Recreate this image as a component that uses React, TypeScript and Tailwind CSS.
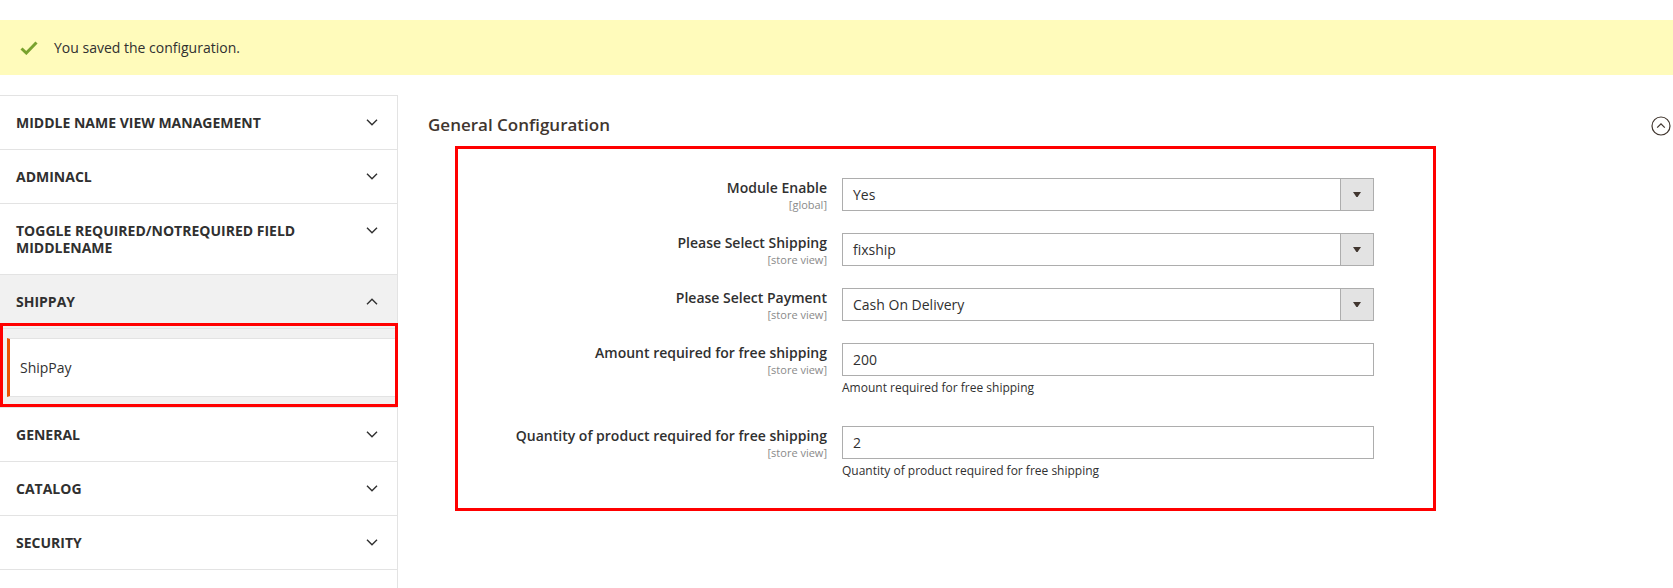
import React from "react";

const NAV_TOP = [
  "Middle Name View Management",
  "AdminACL",
  "Toggle Required/NotRequired Field MiddleName",
];

const NAV_BOTTOM = ["General", "Catalog", "Security"];

function Chevron({ up }: { up?: boolean }) {
  return (
    <svg width="12" height="7" viewBox="0 0 12 7" className="mt-[5px] shrink-0">
      <path
        d={up ? "M1 6.2l5-5 5 5" : "M1 .8l5 5 5-5"}
        fill="none"
        stroke="#303030"
        strokeWidth="1.4"
      />
    </svg>
  );
}

function NavTitle({ label, open }: { label: string; open?: boolean }) {
  return (
    <div
      className={`flex items-start justify-between border-t border-[#e3e3e3] py-[18px] pl-[16px] pr-[19px] ${
        open ? "bg-[#f1f1f1]" : "bg-white"
      }`}
    >
      <span className="pr-[36px] text-[14px] font-bold uppercase leading-[17px] text-[#303030]">
        {label}
      </span>
      <Chevron up={open} />
    </div>
  );
}

function SelectBox({ value }: { value: string }) {
  return (
    <div className="flex h-[33px] w-[532px] border border-[#adadad] bg-white">
      <div className="flex flex-1 items-center pl-[10px] text-[14px] text-[#303030]">{value}</div>
      <div className="flex w-[33px] items-center justify-center border-l border-[#adadad] bg-[#e3e3e3]">
        <svg width="8" height="5" viewBox="0 0 8 5">
          <path d="M0 0h8L4.6 5H3.4z" fill="#41362f" />
        </svg>
      </div>
    </div>
  );
}

function TextBox({ value, note }: { value: string; note: string }) {
  return (
    <div className="pb-[9px]">
      <div className="flex h-[33px] w-[532px] items-center border border-[#adadad] bg-white pl-[10px] text-[14px] text-[#303030]">
        {value}
      </div>
      <div className="mt-[4px] text-[12px] leading-[16px] text-[#303030]">{note}</div>
    </div>
  );
}

function Row({ label, scope, children }: { label: string; scope: string; children: React.ReactNode }) {
  return (
    <div className="flex">
      <div className="w-[369px] text-right">
        <div className="text-[14px] font-semibold leading-[19px] text-[#303030]">{label}</div>
        <div className="text-[11px] leading-[15px] text-[#8a8a8a]">{scope}</div>
      </div>
      <div className="ml-[15px]">{children}</div>
    </div>
  );
}

export default function App() {
  return (
    <div className="min-h-screen bg-white pt-[20px] font-['Open_Sans',sans-serif] text-[#303030]">
      <div className="flex h-[55px] items-center bg-[#fffbbb] pl-[20px]">
        <svg width="18" height="14" viewBox="0 0 18 14">
          <path d="M1.5 7.5l4.8 4.5L16.5 1.5" fill="none" stroke="#79a22e" strokeWidth="3" />
        </svg>
        <span className="ml-[16px] text-[14px] leading-[19px]">You saved the configuration.</span>
      </div>

      <div className="mt-[20px] flex min-h-[513px]">
        <aside className="w-[398px] shrink-0 border-r border-[#e3e3e3]">
          {NAV_TOP.map((t) => (
            <NavTitle key={t} label={t} />
          ))}
          <NavTitle label="ShipPay" open />
          <div className="relative border-t border-[#e3e3e3] bg-[#f1f1f1] pb-[10px] pt-[9px]">
            <div className="ml-[7px] border-y border-l-[3px] border-y-[#e3e3e3] border-l-[#eb5202] bg-white py-[19px] pl-[10px] text-[14px] leading-[19px] text-[#303030]">
              ShipPay
            </div>
            <div className="pointer-events-none absolute -top-[6px] bottom-0 left-0 -right-[1px] border-[3px] border-[#ff0000]" />
          </div>
          {NAV_BOTTOM.map((t) => (
            <NavTitle key={t} label={t} />
          ))}
          <div className="border-t border-[#e3e3e3]" />
        </aside>

        <main className="ml-[30px] flex-1 pr-[2px] pt-[17px]">
          <div className="flex items-center justify-between">
            <h2 className="text-[17px] font-semibold leading-[23px] text-[#41362f]">General Configuration</h2>
            <svg width="20" height="20" viewBox="0 0 20 20" className="mt-[4px]">
              <circle cx="10" cy="10" r="9" fill="none" stroke="#41362f" strokeWidth="1.2" />
              <path d="M6.2 11.6l3.8-3.8 3.8 3.8" fill="none" stroke="#41362f" strokeWidth="1.3" />
            </svg>
          </div>

          <div className="ml-[27px] mt-[10px] flex w-[981px] flex-col gap-[21px] border-[3px] border-[#ff0000] pb-[20px] pt-[29px]">
            <Row label="Module Enable" scope="[global]">
              <SelectBox value="Yes" />
            </Row>
            <Row label="Please Select Shipping" scope="[store view]">
              <SelectBox value="fixship" />
            </Row>
            <Row label="Please Select Payment" scope="[store view]">
              <SelectBox value="Cash On Delivery" />
            </Row>
            <Row label="Amount required for free shipping" scope="[store view]">
              <TextBox value="200" note="Amount required for free shipping" />
            </Row>
            <Row label="Quantity of product required for free shipping" scope="[store view]">
              <TextBox value="2" note="Quantity of product required for free shipping" />
            </Row>
          </div>
        </main>
      </div>
    </div>
  );
}
